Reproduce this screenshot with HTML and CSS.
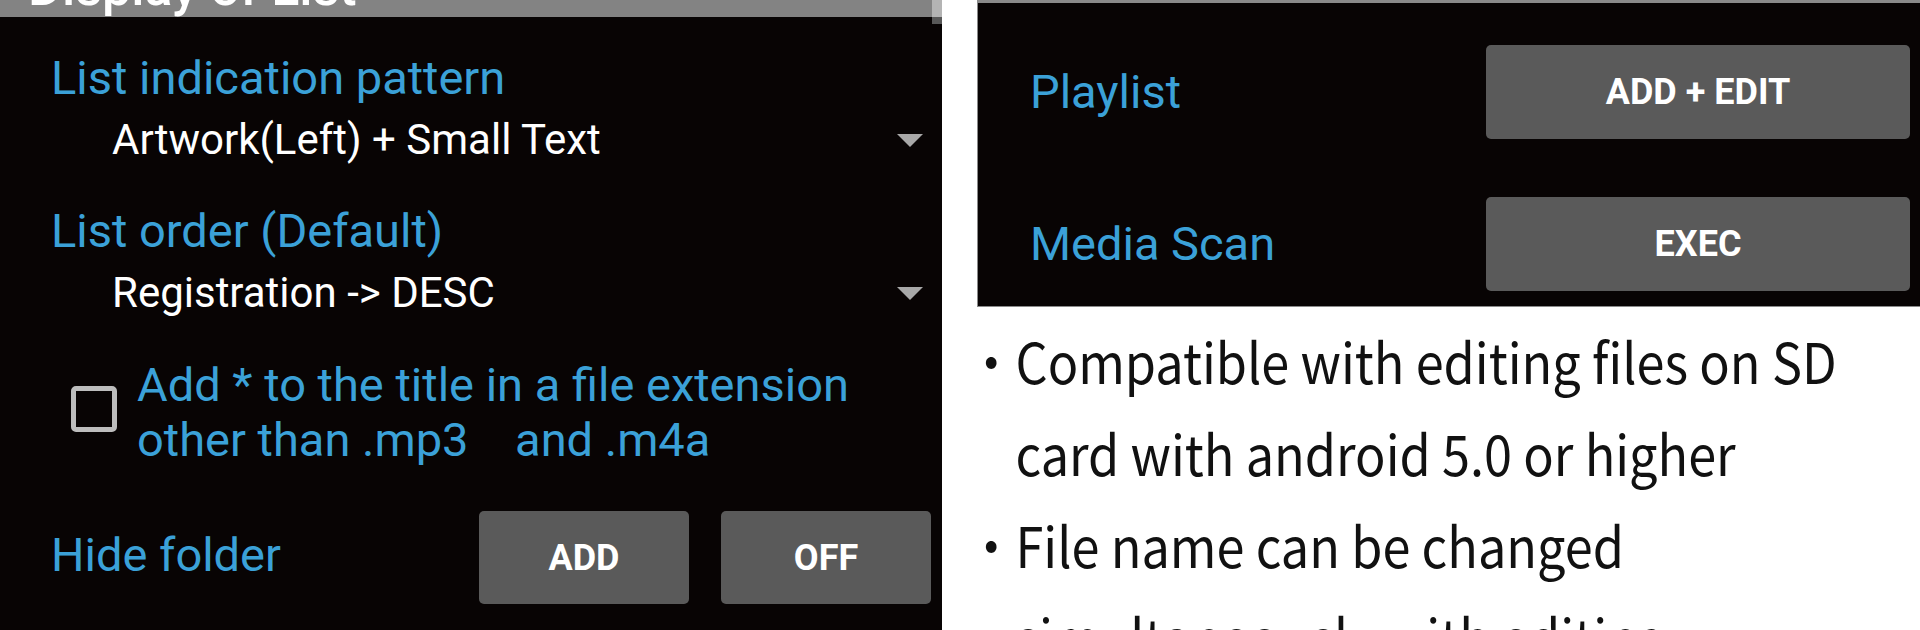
FILE: index.html
```html
<!DOCTYPE html>
<html lang="en">
<head>
<meta charset="utf-8">
<title>Display of List</title>
<link rel="stylesheet" href="styles.css">
</head>
<body>
<div class="page">
  <section class="left">
    <div class="hdr"><span class="hdr-text">Display of List</span></div>
    <div class="scrollbar"><i class="thumb"></i><i class="track"></i></div>
    <div class="content">
      <div class="label first">List indication pattern</div>
      <div class="select">
        <span class="value">Artwork(Left) + Small Text</span>
        <svg class="tri" width="26" height="13" viewBox="0 0 26 13"><polygon points="0,0 26,0 13,13"/></svg>
      </div>
      <div class="label second">List order (Default)</div>
      <div class="select">
        <span class="value">Registration -&gt; DESC</span>
        <svg class="tri" width="26" height="13" viewBox="0 0 26 13"><polygon points="0,0 26,0 13,13"/></svg>
      </div>
      <div class="check-row">
        <span class="box"></span>
        <div class="check-text">Add * to the title in a file extension<br>other than .mp3&nbsp;&nbsp;&nbsp;&nbsp;and .m4a</div>
      </div>
      <div class="btn-row">
        <span class="label hide">Hide folder</span>
        <div class="btns">
          <button class="btn small">ADD</button>
          <button class="btn small">OFF</button>
        </div>
      </div>
    </div>
  </section>
  <section class="right">
    <div class="panel">
      <div class="prow">
        <span class="plabel">Playlist</span>
        <button class="btn wide">ADD + EDIT</button>
      </div>
      <div class="prow">
        <span class="plabel">Media Scan</span>
        <button class="btn wide">EXEC</button>
      </div>
    </div>
    <div class="notes">
      <div class="item"><span class="dot">・</span><span class="txt">Compatible with editing files on SD<br>card with android 5.0 or higher</span></div>
      <div class="item"><span class="dot">・</span><span class="txt">File name can be changed<br>simultaneously with editing</span></div>
    </div>
  </section>
</div>
</body>
</html>
```

FILE: styles.css
```css
* { box-sizing: border-box; }
html, body {
  margin: 0;
  padding: 0;
  background: #ffffff;
}
body {
  width: 1920px;
  height: 630px;
  overflow: hidden;
  font-family: Roboto, "Liberation Sans", sans-serif;
}
.page {
  display: flex;
  align-items: flex-start;
  height: 630px;
  overflow: hidden;
}

/* ---------- left panel ---------- */
.left {
  position: relative;
  flex: none;
  width: 942px;
  height: 630px;
  background: #080404;
  display: flex;
  flex-direction: column;
}
.hdr {
  height: 17px;
  background: #838383;
  overflow: hidden;
  padding-left: 28px;
}
.hdr-text {
  display: block;
  font-weight: 500;
  font-size: 52px;
  line-height: 52px;
  color: #ffffff;
  margin-top: -38px;
  white-space: nowrap;
}
.scrollbar {
  position: absolute;
  top: 0;
  right: 0;
  width: 10px;
  display: flex;
  flex-direction: column;
}
.scrollbar .thumb { display: block; height: 17px; background: #b4b4b4; }
.scrollbar .track { display: block; height: 7px; background: #585858; }

.content {
  padding: 31px 11px 0 51px;
  display: flex;
  flex-direction: column;
}
.label {
  font-size: 47px;
  line-height: 60px;
  color: #3ba1d8;
  white-space: nowrap;
}
.label.second { margin-top: 31px; }
.select {
  margin-top: 2px;
  height: 60px;
  display: flex;
  align-items: center;
  justify-content: space-between;
  padding-left: 61px;
  padding-right: 8px;
}
.value {
  font-size: 42px;
  line-height: 60px;
  color: #ffffff;
  white-space: nowrap;
}
.tri { display: block; fill: #a8a8a8; }

.check-row {
  margin-top: 34px;
  display: flex;
  align-items: flex-start;
  gap: 20px;
  padding-left: 20px;
}
.box {
  flex: none;
  width: 46px;
  height: 46px;
  margin-top: 29px;
  border: 5px solid #bdbdbd;
  border-radius: 5px;
  background: #080404;
}
.check-text {
  font-size: 47px;
  line-height: 55px;
  color: #3ba1d8;
  white-space: nowrap;
}

.btn-row {
  margin-top: 44px;
  display: flex;
  align-items: flex-start;
  justify-content: space-between;
}
.label.hide { line-height: 87px; }
.btns {
  display: flex;
  gap: 32px;
}
.btn {
  border: none;
  margin: 0;
  padding: 0;
  background: #5a5a5a;
  border-radius: 5px;
  color: #ffffff;
  font-family: Roboto, "Liberation Sans", sans-serif;
  font-weight: 700;
  font-size: 36px;
  display: flex;
  align-items: center;
  justify-content: center;
}
.btn.small {
  width: 210px;
  height: 93px;
}

/* ---------- right side ---------- */
.right {
  margin-left: 24px;
  flex: 1;
  min-width: 0;
  overflow: hidden;
  height: 630px;
  display: flex;
  flex-direction: column;
}
.panel {
  flex: none;
  margin-left: 11px;
  height: 307px;
  background: #080404;
  border-left: 1px solid #8a8a8a;
  border-top: 3px solid #8a8a8a;
  border-bottom: 1px solid #8a8a8a;
  padding: 42px 10px 0 52px;
  display: flex;
  flex-direction: column;
  gap: 58px;
}
.prow {
  display: flex;
  align-items: center;
  justify-content: space-between;
  height: 94px;
}
.plabel {
  font-size: 47px;
  line-height: 94px;
  color: #3ba1d8;
  white-space: nowrap;
}
.btn.wide {
  width: 424px;
  height: 94px;
}

.notes {
  margin-top: 7px;
  font-family: "Noto Sans CJK JP", "Noto Sans", sans-serif;
  font-size: 56px;
  line-height: 92px;
  color: #111111;
  transform: scaleX(0.9);
  transform-origin: 0 0;
}
.item {
  display: flex;
  white-space: nowrap;
}
.dot {
  flex: none;
  width: 55px;
}
```
